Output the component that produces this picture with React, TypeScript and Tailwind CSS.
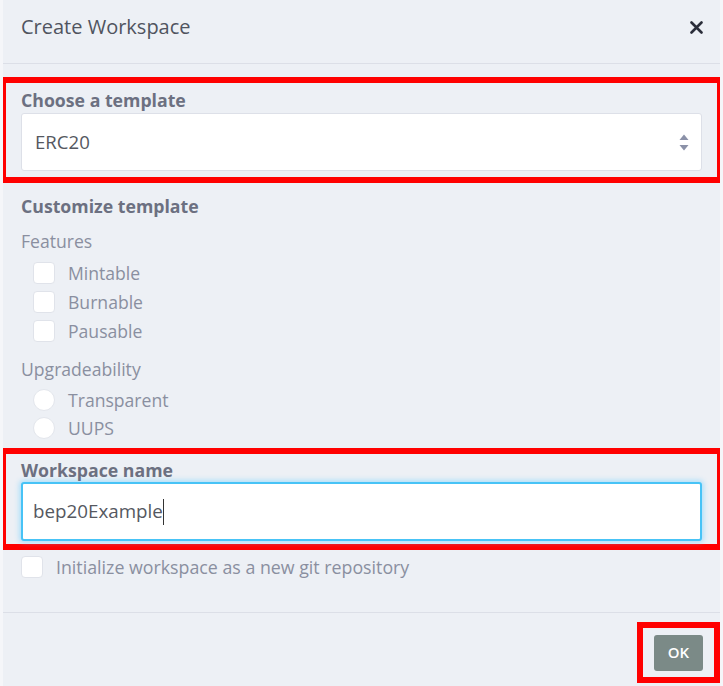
import React from 'react';

const features = ['Mintable', 'Burnable', 'Pausable'];
const upgrades = ['Transparent', 'UUPS'];

function Checkbox() {
  return <span className="block w-[22px] h-[22px] rounded-[4px] bg-white border border-[#e0e3ea]" />;
}

function Radio() {
  return <span className="block w-[22px] h-[22px] rounded-full bg-white border border-[#e3e6ec]" />;
}

export default function App() {
  return (
    <div
      className="w-[723px] h-[686px] bg-[#edf0f5] border-x-[3px] border-[#f5f6f9] flex flex-col overflow-hidden"
      style={{ fontFamily: '"Open Sans", "Noto Sans", sans-serif' }}
    >
      {/* header */}
      <div className="h-[64px] border-b border-[#dcdfe7]">
        <div className="h-[54px] flex items-center justify-between pl-[18px] pr-[17px]">
          <span className="text-[20px] leading-[26px] text-[#50545f]">Create Workspace</span>
          <svg width="13" height="13" viewBox="0 0 13 13">
            <path d="M1.5 1.5 L11.5 11.5 M11.5 1.5 L1.5 11.5" stroke="#2b2e3a" strokeWidth="2.6" strokeLinecap="round" />
          </svg>
        </div>
      </div>

      {/* template */}
      <div className="-mx-[3px] mt-[13px] border-[6px] border-[#ff0000] pt-[6px] pb-[6px] pl-[15px] pr-[15px]">
        <div className="text-[17.7px] leading-[22px] font-bold text-[#6c7081]">Choose a template</div>
        <div className="mt-[2px] h-[58px] bg-white border border-[#dde0e8] rounded-[3px] flex items-center justify-between pl-[13px] pr-[12px]">
          <span className="text-[18.6px] text-[#55585f]">ERC20</span>
          <svg width="10" height="17" viewBox="0 0 10 17">
            <path d="M5 0.5 L9.5 6 L0.5 6 Z" fill="#8b91a8" />
            <path d="M0.5 11 L9.5 11 L5 16.5 Z" fill="#8b91a8" />
          </svg>
        </div>
      </div>

      {/* customize */}
      <div className="px-[18px]">
        <div className="mt-[12px] text-[17.7px] leading-[22px] font-bold text-[#6c7081]">Customize template</div>
        <div className="mt-[13px] text-[17.6px] leading-[22px] text-[#8a8fa0]">Features</div>
        <div className="mt-[6px] flex flex-col">
          {features.map((f) => (
            <div key={f} className="h-[29px] flex items-center pl-[12px] gap-[13px]">
              <Checkbox />
              <span className="text-[17.6px] leading-[22px] text-[#8a8fa0]">{f}</span>
            </div>
          ))}
        </div>
        <div className="mt-[13px] text-[17.6px] leading-[22px] text-[#8a8fa0]">Upgradeability</div>
        <div className="mt-[6px] flex flex-col">
          {upgrades.map((u) => (
            <div key={u} className="h-[28px] flex items-center pl-[12px] gap-[13px]">
              <Radio />
              <span className="text-[17.6px] leading-[22px] text-[#8a8fa0]">{u}</span>
            </div>
          ))}
        </div>
      </div>

      {/* workspace name */}
      <div className="-mx-[3px] mt-[6px] border-[6px] border-[#ff0000] pt-[5px] pb-[3px] pl-[15px] pr-[15px]">
        <div className="text-[17.7px] leading-[22px] font-bold text-[#6c7081]">Workspace name</div>
        <div className="mt-[1px] h-[59px] bg-white border-2 border-[#47c3f6] rounded-[3px] shadow-[0_0_5px_2px_rgba(102,204,255,0.45)] flex items-center pl-[10px]">
          <span className="text-[18.8px] text-[#55585f]">bep20Example</span>
          <span className="w-[1.5px] h-[26px] bg-[#333]" />
        </div>
      </div>

      <div className="px-[18px] mt-[6px] h-[22px] flex items-center gap-[13px]">
        <Checkbox />
        <span className="text-[17.8px] leading-[22px] text-[#8a8fa0]">Initialize workspace as a new git repository</span>
      </div>

      {/* footer */}
      <div className="mt-[34px] border-t border-[#dcdfe7] flex justify-end pt-[9px]">
        <div className="w-[83px] h-[61px] border-[6px] border-[#ff0000] flex items-center justify-center">
          <button className="w-[49px] h-[36px] bg-[#7b8a87] rounded-[3px] text-white text-[15px] font-semibold">OK</button>
        </div>
      </div>
    </div>
  );
}
